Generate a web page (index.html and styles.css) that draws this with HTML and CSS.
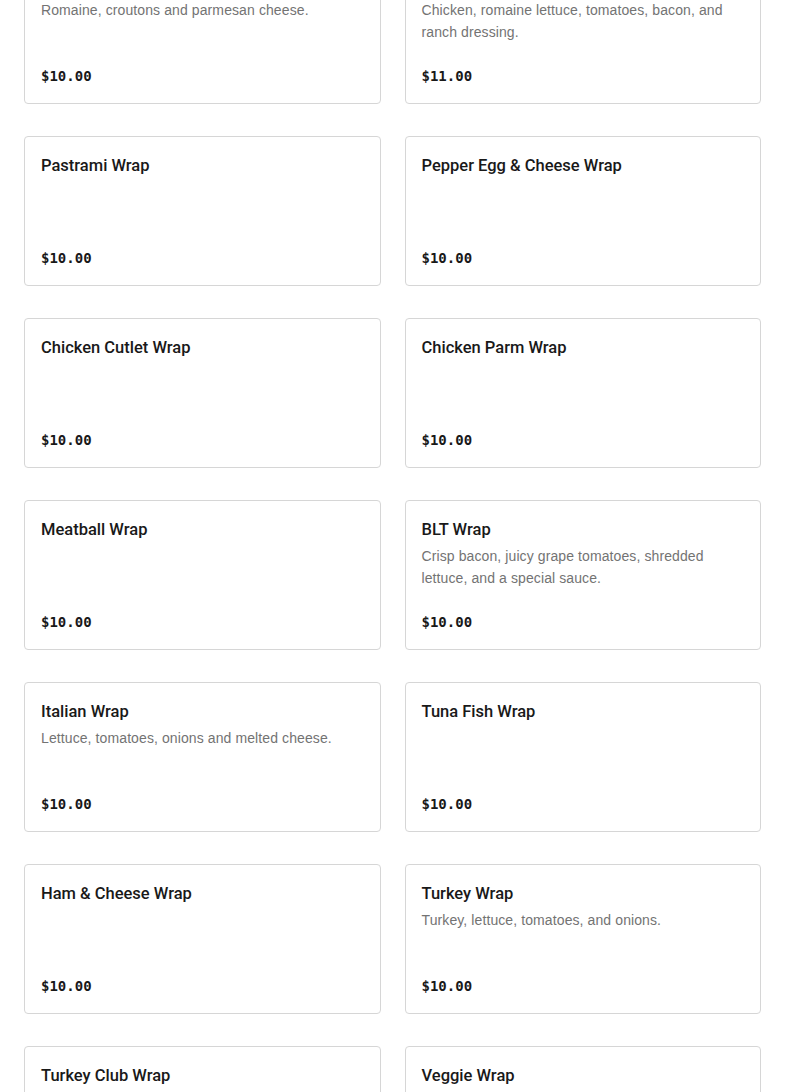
FILE: index.html
```html
<!DOCTYPE html>
<html lang="en">
<head>
<meta charset="utf-8">
<title>Menu</title>
<link rel="stylesheet" href="styles.css">
</head>
<body>
<main class="menu">
  <div class="grid">
    <div class="card"><h3 class="title">Caesar Salad</h3><p class="desc">Romaine, croutons and parmesan cheese.</p><div class="price">$10.00</div></div>
    <div class="card"><h3 class="title">Chicken Caesar Wrap</h3><p class="desc">Chicken, romaine lettuce, tomatoes, bacon, and ranch dressing.</p><div class="price">$11.00</div></div>
    <div class="card"><h3 class="title">Pastrami Wrap</h3><div class="price">$10.00</div></div>
    <div class="card"><h3 class="title">Pepper Egg &amp; Cheese Wrap</h3><div class="price">$10.00</div></div>
    <div class="card"><h3 class="title">Chicken Cutlet Wrap</h3><div class="price">$10.00</div></div>
    <div class="card"><h3 class="title">Chicken Parm Wrap</h3><div class="price">$10.00</div></div>
    <div class="card"><h3 class="title">Meatball Wrap</h3><div class="price">$10.00</div></div>
    <div class="card"><h3 class="title">BLT Wrap</h3><p class="desc">Crisp bacon, juicy grape tomatoes, shredded lettuce, and a special sauce.</p><div class="price">$10.00</div></div>
    <div class="card"><h3 class="title">Italian Wrap</h3><p class="desc">Lettuce, tomatoes, onions and melted cheese.</p><div class="price">$10.00</div></div>
    <div class="card"><h3 class="title">Tuna Fish Wrap</h3><div class="price">$10.00</div></div>
    <div class="card"><h3 class="title">Ham &amp; Cheese Wrap</h3><div class="price">$10.00</div></div>
    <div class="card"><h3 class="title">Turkey Wrap</h3><p class="desc">Turkey, lettuce, tomatoes, and onions.</p><div class="price">$10.00</div></div>
    <div class="card"><h3 class="title">Turkey Club Wrap</h3><div class="price">$10.00</div></div>
    <div class="card"><h3 class="title">Veggie Wrap</h3><div class="price">$10.00</div></div>
  </div>
</main>
</body>
</html>
```
FILE: styles.css
```css
html, body {
  margin: 0;
  padding: 0;
  background: #ffffff;
}
body {
  font-family: "Liberation Sans", Arial, sans-serif;
  color: #191919;
}
.menu {
  padding: 0 24px;
  margin-top: -46px;
}
.grid {
  display: grid;
  grid-template-columns: 1fr 1fr;
  column-gap: 24px;
  row-gap: 32px;
}
.card {
  box-sizing: border-box;
  height: 150px;
  border: 1px solid #d6d6d6;
  border-radius: 4px;
  padding: 17px 16px 15px;
  display: flex;
  flex-direction: column;
}
.title {
  margin: 0;
  font-family: Roboto, "Liberation Sans", sans-serif;
  font-size: 16.5px;
  font-weight: 500;
  line-height: 24px;
  color: #191919;
}
.desc {
  margin: 3px 0 0;
  font-size: 14px;
  line-height: 22px;
  letter-spacing: 0.1px;
  color: #737373;
}
.price {
  margin-top: auto;
  font-family: "DejaVu Sans Mono", "Liberation Mono", monospace;
  font-size: 14px;
  font-weight: 700;
  line-height: 24px;
  color: #191919;
}
```
